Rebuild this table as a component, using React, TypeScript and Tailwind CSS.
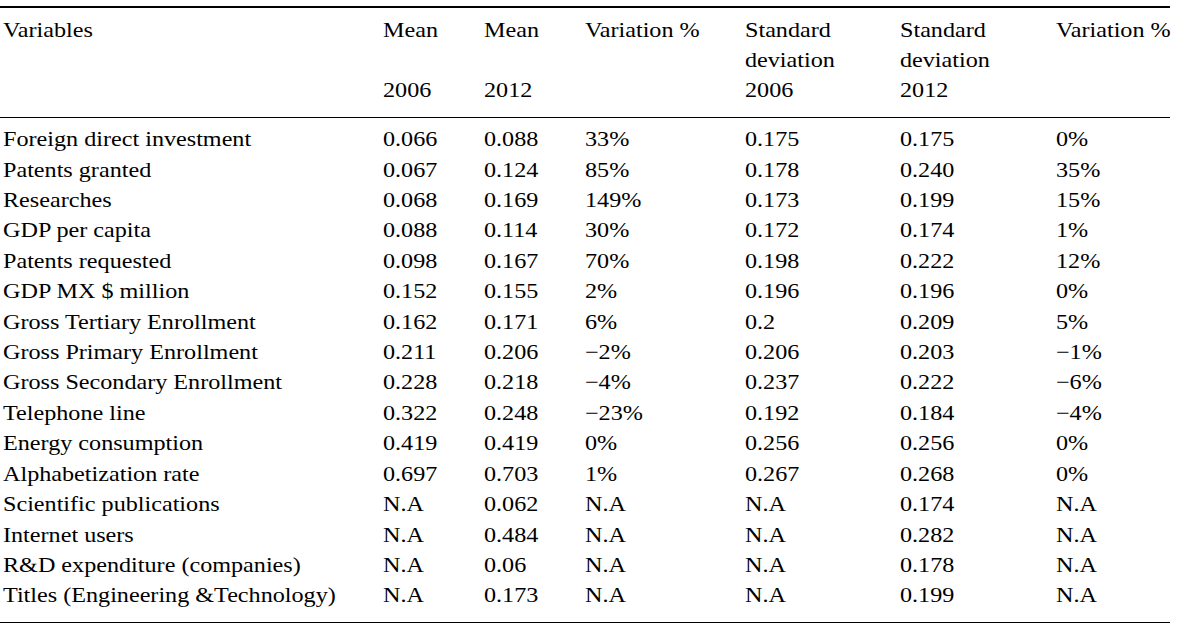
import React from "react";

const rows: string[][] = [
  ["Foreign direct investment", "0.066", "0.088", "33%", "0.175", "0.175", "0%"],
  ["Patents granted", "0.067", "0.124", "85%", "0.178", "0.240", "35%"],
  ["Researches", "0.068", "0.169", "149%", "0.173", "0.199", "15%"],
  ["GDP per capita", "0.088", "0.114", "30%", "0.172", "0.174", "1%"],
  ["Patents requested", "0.098", "0.167", "70%", "0.198", "0.222", "12%"],
  ["GDP MX $ million", "0.152", "0.155", "2%", "0.196", "0.196", "0%"],
  ["Gross Tertiary Enrollment", "0.162", "0.171", "6%", "0.2", "0.209", "5%"],
  ["Gross Primary Enrollment", "0.211", "0.206", "\u22122%", "0.206", "0.203", "\u22121%"],
  ["Gross Secondary Enrollment", "0.228", "0.218", "\u22124%", "0.237", "0.222", "\u22126%"],
  ["Telephone line", "0.322", "0.248", "\u221223%", "0.192", "0.184", "\u22124%"],
  ["Energy consumption", "0.419", "0.419", "0%", "0.256", "0.256", "0%"],
  ["Alphabetization rate", "0.697", "0.703", "1%", "0.267", "0.268", "0%"],
  ["Scientific publications", "N.A", "0.062", "N.A", "N.A", "0.174", "N.A"],
  ["Internet users", "N.A", "0.484", "N.A", "N.A", "0.282", "N.A"],
  ["R&D expenditure (companies)", "N.A", "0.06", "N.A", "N.A", "0.178", "N.A"],
  ["Titles (Engineering &Technology)", "N.A", "0.173", "N.A", "N.A", "0.199", "N.A"],
];

const grid = "grid grid-cols-[383px_101px_101px_160px_155px_156px_114px]";

function T({ children }: { children: React.ReactNode }) {
  return (
    <span className="inline-block origin-left scale-x-[1.15] whitespace-nowrap">{children}</span>
  );
}

export default function App() {
  return (
    <div
      className="w-[1187px] h-[629px] bg-white text-black text-[21px] leading-[30.4px]"
      style={{ fontFamily: '"Liberation Serif", "Times New Roman", serif' }}
    >
      <div className="w-[1170px] pt-[6px]">
        <div className="h-[1.5px] bg-black" />
        <div className={`${grid} pt-[7px] pb-[11px]`}>
          <div className="pl-[3px]"><T>Variables</T></div>
          <div className="flex flex-col">
            <T>Mean</T>
            <span>&nbsp;</span>
            <T>2006</T>
          </div>
          <div className="flex flex-col">
            <T>Mean</T>
            <span>&nbsp;</span>
            <T>2012</T>
          </div>
          <div><T>Variation %</T></div>
          <div className="flex flex-col">
            <T>Standard</T>
            <T>deviation</T>
            <T>2006</T>
          </div>
          <div className="flex flex-col">
            <T>Standard</T>
            <T>deviation</T>
            <T>2012</T>
          </div>
          <div><T>Variation %</T></div>
        </div>
        <div className="h-[1.5px] bg-black" />
        <div className="pt-[6px] pb-[11px]">
          {rows.map((r, i) => (
            <div key={i} className={grid}>
              {r.map((c, j) => (
                <div key={j} className={j === 0 ? "pl-[3px]" : ""}>
                  <T>{c}</T>
                </div>
              ))}
            </div>
          ))}
        </div>
        <div className="h-[1.5px] bg-black" />
      </div>
    </div>
  );
}
